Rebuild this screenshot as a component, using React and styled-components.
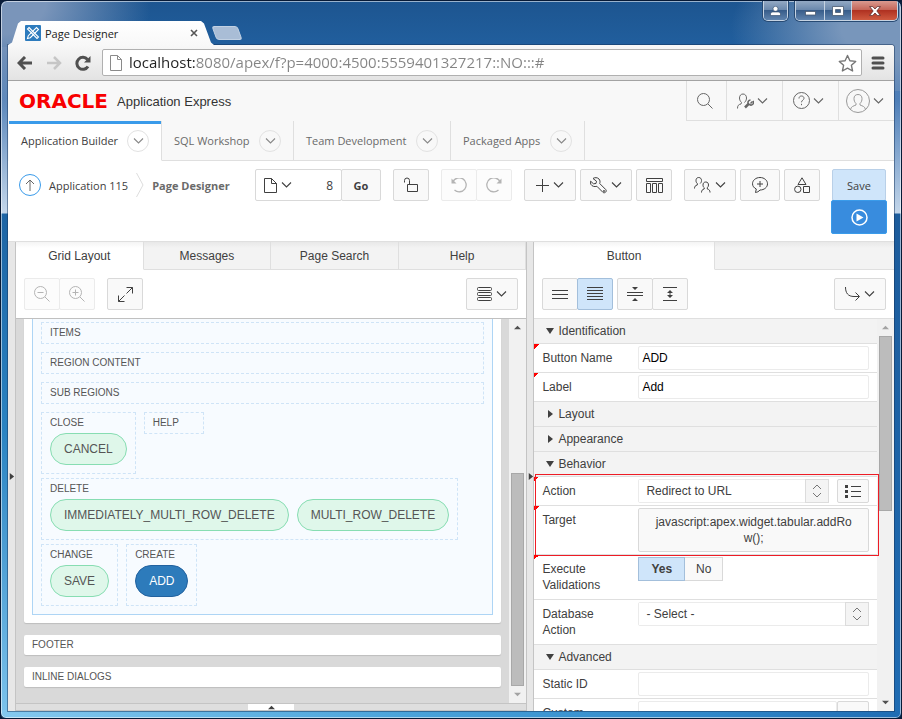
import React from 'react'
import styled, { createGlobalStyle, css, ThemeProvider } from 'styled-components'

const theme = {
  font: {
    ui: '"Open Sans", "Noto Sans", sans-serif',
    panel: '"Liberation Sans", Arial, sans-serif',
  },
  size: { xs: '10px', sm: '11px', md: '12px', lg: '13px', xl: '15px' },
  color: {
    text: '#404040',
    muted: '#6a6a6a',
    line: '#dfdfdf',
    strong: '#c4c4c4',
    button: '#f9f9f9',
    bar: '#f3f3f3',
    blue: '#3a9bea',
    selected: '#cfe5fa',
  },
}

const GlobalStyle = createGlobalStyle`
  * { box-sizing: border-box; }
  body { margin: 0; background: #0a1c38; }
  button, input, select { font: inherit; color: inherit; margin: 0; }
  button { cursor: pointer; }
  svg { display: block; flex: none; }
`

/* ---------- window frame ---------- */

const Frame = styled.div`
  height: 100vh;
  display: flex;
  flex-direction: column;
  overflow: hidden;
  border: 1px solid #071a36;
  border-radius: 7px 7px 6px 6px;
  box-shadow: inset 0 0 0 1px rgba(255, 255, 255, 0.55);
  font-family: ${({ theme }) => theme.font.ui};
  font-size: ${({ theme }) => theme.size.sm};
  color: ${({ theme }) => theme.color.text};
  background:
    radial-gradient(ellipse 150px 110px at 0 0, #7a95ba 30%, rgba(122, 149, 186, 0) 100%) left top / 180px 110px no-repeat,
    radial-gradient(ellipse 170px 90px at 100% 30%, #7896bb 35%, rgba(120, 150, 187, 0) 100%) right top / 200px 90px no-repeat,
    linear-gradient(#1d5590, #215f9e) left top / 100% 46px no-repeat,
    linear-gradient(90deg, #84c9ef, #4aa3da 45%, #2f86c8 80%, #1f6cb3) left bottom / 100% 8px no-repeat,
    linear-gradient(#4878b0 0, #5c88bc 100px, #c3d6ea 212px, #1d64a4 213px, #2a83c2 60%, #7cc3ec) left top / 50% 100% no-repeat,
    linear-gradient(#4878b0 0, #4f7fb8 100px, #c3d6ea 212px, #1d5c9c 213px, #1f6cb3) right top / 50% 100% no-repeat;
`

const TitleBar = styled.header`
  flex: none;
  height: 44px;
  padding: 0 3px 0 7px;
  display: flex;
  align-items: flex-end;
`

const BrowserTab = styled.div`
  width: 206px;
  height: 24px;
  padding: 0 16px 0 17px;
  display: flex;
  align-items: center;
  gap: 4px;
  background: linear-gradient(#fff, #f8f8f8);
  color: #222;
  clip-path: polygon(0 100%, 4px 90%, 10px 10%, 13px 0, calc(100% - 13px) 0, calc(100% - 10px) 10%, calc(100% - 3px) 90%, 100% 100%);
`

const TabTitle = styled.span`
  flex: 1;
`

const BareButton = styled.button`
  display: flex;
  align-items: center;
  justify-content: center;
  padding: 0;
  border: 0;
  background: none;
`

const NewTab = styled(BareButton)`
  width: 26px;
  height: 14px;
  margin-bottom: 5px;
  border: 1px solid #c2d1e3;
  border-radius: 3px;
  background: #a9bdd6;
  transform: skewX(20deg);
`

const WindowControls = styled.div`
  margin-left: auto;
  align-self: flex-start;
  display: flex;
  gap: 7px;
`

const ControlGroup = styled.div`
  display: flex;
  height: 20px;
  border: 1px solid #c6d3e2;
  border-top: 0;
  border-radius: 0 0 5px 5px;
  overflow: hidden;
  box-shadow: 0 0 0 1px #274a73;
`

const ControlButton = styled(BareButton)`
  width: ${({ $width }) => $width}px;
  background: ${({ $danger }) =>
    $danger
      ? 'linear-gradient(#d99a90, #c5675a 45%, #b03222 50%, #cf5a40)'
      : 'linear-gradient(#93a9c4, #6c89ad 45%, #385d8a 50%, #5f83ad)'};

  & + & {
    border-left: 1px solid #c6d3e2;
  }
`

const Browser = styled.div`
  flex: 1;
  min-height: 0;
  margin: 0 7px 7px;
  display: flex;
  flex-direction: column;
  background: #fff;
  border-radius: 0 3px 0 0;
  box-shadow: 0 0 0 1px rgba(20, 50, 90, 0.5);
`

const AddressBar = styled.div`
  flex: none;
  height: 36px;
  padding: 0 9px;
  display: flex;
  align-items: center;
  background: linear-gradient(#f8f8f8, #e3e3e3);
  border-bottom: 1px solid #a3a3a3;
  border-radius: 0 3px 0 0;
`

const NavIcons = styled.div`
  display: flex;
  gap: 13px;
  margin-right: 11px;
`

const Omnibox = styled.label`
  flex: 1;
  height: 27px;
  padding: 0 4px 0 7px;
  display: flex;
  align-items: center;
  gap: 7px;
  background: #fff;
  border: 1px solid #b0b0b0;
  border-radius: 2px;
`

const UrlInput = styled.input`
  flex: 1;
  min-width: 0;
  padding: 0 0 2px;
  border: 0;
  outline: 0;
  font-size: ${({ theme }) => theme.size.xl};
  background: linear-gradient(90deg, #222 66px, #848484 66px);
  -webkit-background-clip: text;
  background-clip: text;
  -webkit-text-fill-color: transparent;
`

const MenuButton = styled(BareButton)`
  margin-left: 9px;
`

/* ---------- application header ---------- */

const AppHeader = styled.div`
  flex: none;
  height: 40px;
  display: flex;
  background: #f8f8f8;
`

const Brand = styled.a`
  padding-left: 11px;
  display: flex;
  align-items: center;
  font-family: ${({ theme }) => theme.font.panel};
  font-size: ${({ theme }) => theme.size.lg};
  color: #333;
  text-decoration: none;
`

const Logo = styled.span`
  width: 98px;
  font: bold 20px/20px "DejaVu Sans", sans-serif;
  color: #f80000;
`

const HeaderActions = styled.nav`
  margin-left: auto;
  display: flex;
  border-bottom: 1px solid ${({ theme }) => theme.color.line};
`

const HeaderAction = styled(BareButton)`
  width: ${({ $wide }) => ($wide ? 56 : 40)}px;
  padding-right: 4px;
  gap: 3px;
  border-left: 1px solid ${({ theme }) => theme.color.line};
  color: #666;
`

const NavTabs = styled.nav`
  flex: none;
  height: 40px;
  padding-left: 1px;
  display: flex;
  background: #f8f8f8;

  &::after {
    content: "";
    flex: 1;
    border-bottom: 1px solid ${({ theme }) => theme.color.line};
  }
`

const NavTab = styled.a`
  width: ${({ $width }) => $width}px;
  padding: 0 12px;
  display: flex;
  align-items: center;
  justify-content: space-between;
  border-right: 1px solid ${({ theme }) => theme.color.line};
  border-bottom: 1px solid ${({ theme }) => theme.color.line};
  color: ${({ theme }) => theme.color.muted};
  text-decoration: none;

  ${({ $active }) =>
    $active &&
    css`
      background: linear-gradient(${({ theme }) => theme.color.blue} 3px, #fff 3px);
      border-bottom-color: #fff;
      color: ${({ theme }) => theme.color.text};
    `}
`

const Ring = styled.span`
  width: 22px;
  height: 22px;
  display: flex;
  align-items: center;
  justify-content: center;
  border: 1px solid #e2e2e2;
  border-radius: 50%;
  color: #888;
`

/* ---------- page toolbar ---------- */

const PageToolbar = styled.div`
  flex: none;
  padding: 8px 8px 7px 11px;
  display: flex;
  align-items: flex-start;
  gap: 12px;
`

const Breadcrumb = styled.nav`
  height: 32px;
  margin-right: auto;
  display: flex;
  align-items: center;
  gap: 8px;

  a {
    color: inherit;
    text-decoration: none;
  }

  strong {
    color: ${({ theme }) => theme.color.muted};
  }
`

const UpLink = styled.a`
  width: 22px;
  height: 22px;
  display: flex;
  align-items: center;
  justify-content: center;
  border: 1px solid ${({ theme }) => theme.color.blue};
  border-radius: 50%;
`

const Cluster = styled.div`
  display: flex;
  gap: 4px;
`

const Joined = styled.div`
  display: flex;

  & > * + * {
    margin-left: -1px;
  }
`

const toolSizes = { sm: '36px', md: '40px', lg: '52px' }

const ToolButton = styled.button`
  width: ${({ $size }) => toolSizes[$size || 'sm']};
  height: 32px;
  padding: 0;
  display: flex;
  align-items: center;
  justify-content: center;
  gap: 4px;
  border: 1px solid #d9d9d9;
  border-radius: 2px;
  background: ${({ theme }) => theme.color.button};
  color: ${({ theme }) => theme.color.text};

  &:disabled {
    border-color: #ebebeb;
    background: #fcfcfc;
    color: #b4b4b4;
  }

  ${({ $selected }) =>
    $selected &&
    css`
      position: relative;
      background: ${({ theme }) => theme.color.selected};
      border-color: #a3bfdb;
    `}
`

const GoButton = styled(ToolButton)`
  font-weight: bold;
`

const PagePicker = styled.div`
  width: 87px;
  display: flex;
  align-items: center;
  border: 1px solid #d9d9d9;
  border-radius: 2px;
  background: #fff;
`

const PickerButton = styled(BareButton)`
  padding-left: 8px;
  gap: 4px;
`

const PageInput = styled.input`
  flex: 1;
  min-width: 0;
  padding: 0 8px 0 0;
  border: 0;
  outline: 0;
  background: none;
  text-align: right;
  font-size: ${({ theme }) => theme.size.md};
`

const SaveStack = styled.div`
  width: 54px;
`

const SaveButton = styled(ToolButton)`
  width: 100%;
  background: ${({ theme }) => theme.color.selected};
  border-color: #b9d0e8;
`

const RunButton = styled(ToolButton)`
  position: relative;
  width: calc(100% + 2px);
  height: 34px;
  margin: -1px -1px 0;
  border-color: #3a9bea;
  background: #388cde;
  color: #fff;
`

/* ---------- panes ---------- */

const Workspace = styled.main`
  flex: 1;
  min-height: 0;
  display: flex;
  border-top: 1px solid ${({ theme }) => theme.color.line};
  font-family: ${({ theme }) => theme.font.panel};
  font-size: ${({ theme }) => theme.size.md};
`

const Splitter = styled.div`
  flex: none;
  width: ${({ $width }) => $width}px;
  display: flex;
  align-items: center;
  justify-content: center;
  border-right: 1px solid ${({ theme }) => theme.color.strong};
  background: #e7e7e7;
`

const Pane = styled.section`
  flex: ${({ $grow }) => $grow} 1 0;
  min-width: 0;
  display: flex;
  flex-direction: column;
  border-right: ${({ $edge, theme }) => ($edge ? `1px solid ${theme.color.strong}` : '0')};
`

const PaneTabs = styled.div`
  flex: none;
  height: 28px;
  display: flex;
`

const PaneTab = styled.button`
  flex: 1;
  padding: 0;
  border: solid ${({ theme }) => theme.color.line};
  border-width: 0 1px 1px 0;
  background: linear-gradient(#e8e8e8, #f3f3f3 6px);

  ${({ $active }) =>
    $active &&
    css`
      border-bottom-color: #fff;
      background: linear-gradient(#f4f4f4, #fff 6px);
    `}
`

const TabFiller = styled.div`
  flex: 1;
  border-bottom: 1px solid ${({ theme }) => theme.color.line};
  background: linear-gradient(#e8e8e8, #f3f3f3 6px);
`

const PaneToolbar = styled.div`
  flex: none;
  height: 49px;
  padding: 8px;
  display: flex;
  gap: ${({ $gap }) => $gap}px;
  border-bottom: 1px solid ${({ $line }) => $line};

  & > :last-child {
    margin-left: auto;
  }
`

const PaneBody = styled.div`
  flex: 1;
  min-height: 0;
  display: flex;
  overflow: hidden;
`

const Scrollbar = styled.div`
  flex: none;
  width: 17px;
  display: flex;
  flex-direction: column;
  align-items: center;
  background: #f1f1f1;
`

const ScrollArrow = styled(BareButton)`
  flex: none;
  width: 17px;
  height: 17px;
  color: ${({ $dim }) => ($dim ? '#a3a3a3' : '#505050')};
`

const ScrollTrack = styled.div`
  flex: 1;
  width: 13px;
  display: flex;
  align-items: ${({ $end }) => ($end ? 'flex-end' : 'flex-start')};
`

const ScrollThumb = styled.div`
  width: 100%;
  height: ${({ $length }) => $length}%;
  border: 1px solid #a8a8a8;
  background: #bcbcbc;
`

/* ---------- grid layout pane ---------- */

const LayoutCanvas = styled.div`
  flex: 1;
  min-width: 0;
  padding: 0 8px;
  background: #d9d9d9;
  color: #555;
`

const PageCard = styled.div`
  padding: 0 8px 8px;
  margin-bottom: 12px;
  background: #fff;
  border-radius: 0 0 2px 2px;
  box-shadow: 0 1px 1px #bdbdbd;
`

const Region = styled.div`
  padding: 3px 8px 8px;
  display: flex;
  flex-direction: column;
  gap: 4px;
  border: 1px solid #aed5f5;
  border-top: 0;
  background: #f7fbff;
`

const SlotStack = styled.div`
  margin-bottom: 4px;
  display: flex;
  flex-direction: column;
  gap: 8px;
`

const SlotRow = styled.div`
  display: flex;
  align-items: flex-start;
  gap: 8px;
`

const SlotBox = styled.div`
  min-width: 60px;
  padding: ${({ $filled }) => ($filled ? '0 8px 8px' : '0 8px')};
  border: 1px dashed #cfe4f7;
`

const SlotTitle = styled.div`
  font-size: ${({ theme }) => theme.size.xs};
  line-height: 20px;
`

const Pills = styled.div`
  display: flex;
  gap: 8px;
`

const Pill = styled.button`
  height: 32px;
  padding: 0 13px;
  border: 1px solid #87ddb2;
  border-radius: 16px;
  background: #dff7ea;

  ${({ $current }) =>
    $current &&
    css`
      border-color: #22629f;
      background: #2d7bbb;
      color: #fff;
    `}
`

const PositionCard = styled.div`
  height: 20px;
  margin-bottom: 12px;
  padding: 0 8px;
  font-size: ${({ theme }) => theme.size.xs};
  line-height: 20px;
  background: #fff;
  border-radius: 2px;
  box-shadow: 0 1px 1px #bdbdbd;
`

const BottomSplitter = styled.div`
  flex: none;
  height: 8px;
  display: flex;
  justify-content: center;
  border: solid ${({ theme }) => theme.color.strong};
  border-width: 1px 0;
  background: #dedede;
`

const SplitterHandle = styled(BareButton)`
  width: 46px;
  background: #fff;
`

/* ---------- property editor ---------- */

const Properties = styled.div`
  flex: 1;
  min-width: 0;
`

const GroupHeader = styled.button`
  width: 100%;
  height: 25px;
  padding: 0 12px;
  display: flex;
  align-items: center;
  gap: 4px;
  border: 0;
  border-bottom: 1px solid ${({ theme }) => theme.color.line};
  background: ${({ theme }) => theme.color.bar};
`

const Property = styled.div`
  position: relative;
  min-height: ${({ $tall }) => ($tall ? 45 : 29)}px;
  padding: 2px 8px;
  display: grid;
  grid-template-columns: 96px 1fr;
  align-items: start;
  border-bottom: 1px solid ${({ theme }) => theme.color.line};

  &::before {
    content: ${({ $changed }) => ($changed ? '""' : 'none')};
    position: absolute;
    top: 0;
    left: 0;
    width: 5px;
    height: 5px;
    background: linear-gradient(135deg, #f00 50%, transparent 50%);
  }
`

const PropertyLabel = styled.label`
  padding: 4px 24px 0 0;
  line-height: 16px;
`

const TextField = styled.input`
  width: 100%;
  min-width: 0;
  height: 24px;
  padding: 0 3px;
  border: 1px solid #ebebeb;
  border-radius: 2px;
  background: #fff;
  color: #000;
`

const FieldRow = styled.div`
  display: flex;
  gap: ${({ $gap }) => $gap || 0}px;
`

const SelectShell = styled.div`
  flex: 1;
  height: 24px;
  display: flex;
  border: 1px solid #ebebeb;
  border-radius: 2px;
`

const Select = styled.select`
  flex: 1;
  min-width: 0;
  padding: 0 7px;
  appearance: none;
  border: 0;
  background: #fff;
`

const SelectArrow = styled.span`
  width: 24px;
  margin: -1px;
  display: flex;
  align-items: center;
  justify-content: center;
  border: 1px solid #dcdcdc;
  background: #f4f4f4;
  color: #777;
`

const SideButton = styled(ToolButton)`
  flex: none;
  width: 32px;
  height: 24px;
`

const TargetButton = styled(ToolButton)`
  display: block;
  width: 100%;
  height: 44px;
  padding: 0 14px;
  line-height: 16px;
  word-break: break-all;
`

const Choice = styled.label`
  height: 24px;
  padding: 0 ${({ $checked }) => ($checked ? 12 : 11)}px;
  display: flex;
  align-items: center;
  border: 1px solid #d9d9d9;
  background: ${({ theme }) => theme.color.button};

  &:has(input:checked) {
    z-index: 1;
    border-color: #a3bfdb;
    background: ${({ theme }) => theme.color.selected};
    font-weight: bold;
  }

  input {
    appearance: none;
    width: 0;
    height: 0;
    margin: 0;
  }
`

const Highlight = styled.div`
  position: relative;

  &::after {
    content: "";
    position: absolute;
    inset: -3px -2px -1px 1px;
    border: 1px solid #ee1c25;
    pointer-events: none;
  }
`

/* ---------- icons ---------- */

const Icon = ({ w = 16, h = 16, sw = 1, children, ...rest }) => (
  <svg width={w} height={h} viewBox={`0 0 ${w} ${h}`} fill="none" stroke="currentColor" strokeWidth={sw} aria-hidden="true" {...rest}>
    {children}
  </svg>
)

const Chevron = () => <Icon w={11} h={6} sw={1.1}><path d="M1 .5l4.500 4.500L10 .5" /></Icon>

const Triangle = ({ dir = 'up', size = 7 }) => {
  const d = { up: 'M0 6l4-4 4 4z', down: 'M0 1h8l-4 6z', flat: 'M0 2h8l-4 4z', right: 'M2 0v8l5-4z' }[dir]
  return <svg width={size} height={size} viewBox="0 0 8 8" fill="currentColor" aria-hidden="true"><path d={d} /></svg>
}

const ApexIcon = () => (
  <svg width="16" height="16" viewBox="0 0 16 16" aria-hidden="true">
    <rect width="16" height="16" rx="1" fill="#2d7bbd" />
    <g fill="none" stroke="#fff" strokeWidth="1.100">
      <path d="M4 2.500L13.500 12l-1.500 1.500L2.500 4z" />
      <path d="M2.500 13.500l.8-2.800 8.200-8.200 2 2-8.200 8.200z" />
    </g>
  </svg>
)

const BackIcon = () => <Icon w={16} h={14} sw={3} stroke="#505050"><path d="M15 7H3M8 1L2 7l6 6" /></Icon>
const ForwardIcon = () => <Icon w={16} h={14} sw={2.500} stroke="#c6c6c6"><path d="M1 7h12M8 1l6 6-6 6" /></Icon>
const ReloadIcon = () => (
  <Icon w={16} h={16} sw={3} stroke="#505050">
    <path d="M13 11.500A6 6 0 1 1 12.500 4.500" />
    <path d="M15.500 1v6.500H9z" fill="#505050" stroke="none" />
  </Icon>
)
const StarIcon = () => <Icon w={19} h={18} sw={1.4} stroke="#777"><path d="M9.500 1.500l2.400 5.300 5.800.6-4.300 3.900 1.200 5.700-5.100-2.900-5.100 2.900 1.200-5.700L1.300 7.400l5.800-.6z" strokeLinejoin="round" /></Icon>
const DocIcon = () => <Icon w={12} h={16} stroke="#8a8a8a"><path d="M.5.5h7l4 4v11H.5zM7.500.5v4h4" /></Icon>
const MenuIcon = () => <Icon w={14} h={14} sw={3} stroke="#505050" strokeLinecap="round"><path d="M2 2h10M2 7h10M2 12h10" /></Icon>
const CloseX = () => <Icon w={8} h={8} sw={1.6} stroke="#555"><path d="M1 1l6 6M7 1L1 7" /></Icon>

const SearchIcon = () => <Icon><circle cx="6.500" cy="6.500" r="6" /><path d="M11 11l4.500 4.500" /></Icon>
const UserWrenchIcon = () => (
  <Icon w={17}>
    <path d="M.5 15.500c0-3 1-4 3.500-4.500l.5-1.500C3 8 2.500 6.500 2.500 5c0-2.500 1.500-4 3.500-4s3.500 1.500 3.500 4c0 1.500-.5 3-2 4.500" />
    <path d="M8 14.500l4-4" strokeWidth="2.500" />
    <path d="M15.500 8.500l-2 2M11.500 11a2.500 2.500 0 0 1 2-4M16 8a2.500 2.500 0 0 1-4 3" strokeWidth="1.500" />
  </Icon>
)
const HelpIcon = () => (
  <Icon w={17} h={17}>
    <circle cx="8.500" cy="8.500" r="8" />
    <path d="M6 6.500c0-1.500 1-2.500 2.500-2.500S11 5 11 6.300c0 1.700-2.500 1.900-2.500 4M8.500 11.800v1.400" />
  </Icon>
)
const AvatarIcon = () => (
  <Icon w={24} h={24} stroke="#999">
    <circle cx="12" cy="12" r="11.500" />
    <path d="M4.500 20.500c.5-3 3-3.500 5.500-4.500v-1.500C8.500 13 8 11.500 8 9.500 8 7 9.500 5.500 12 5.500S16 7 16 9.500c0 2-.5 3.500-2 5V16c2.500 1 5 1.500 5.500 4.500" />
  </Icon>
)
const UpArrow = () => <Icon w={10} h={12} stroke="#666"><path d="M5 12V1M1 5l4-4 4 4" /></Icon>
const Separator = () => <Icon w={8} h={24} stroke="#ddd"><path d="M.5 0l6.500 12L.5 24" /></Icon>
const FileIcon = () => <Icon w={13} h={15}><path d="M.5.5h7l5 5v9H.5zM7.500.5v5h5" /></Icon>
const LockIcon = () => <Icon w={14}><path d="M3.500 7.500h10v7h-10zM.5 5.500v-2a2.500 2.500 0 0 1 5 0v4" /></Icon>
const UndoIcon = () => (
  <Icon w={16} h={15} sw={1.300}>
    <path d="M2 3.500a7 7 0 1 1 1.500 8.500" />
    <path d="M.5.500v5h5z" fill="currentColor" stroke="none" />
  </Icon>
)
const RedoIcon = () => (
  <Icon w={16} h={15} sw={1.300}>
    <path d="M14 3.500a7 7 0 1 0-1.500 8.500" />
    <path d="M15.500.500v5h-5z" fill="currentColor" stroke="none" />
  </Icon>
)
const PlusIcon = () => <Icon w={13} h={13}><path d="M6.500 0v13M0 6.500h13" /></Icon>
const WrenchIcon = () => (
  <Icon w={17} h={17}>
    <path d="M3 1.500C4.500.3 7.500.3 9 2c1.200 1.400 1.200 3 .7 4.500l6 6c1.600 2-1 4.300-2.800 2.800l-6-6C4.500 10 2 9.300 1 7.500.4 6.500.3 5.300.6 4.200l2.900 2.600L6 6.500l.5-2.300z" />
    <circle cx="14" cy="14" r=".6" />
  </Icon>
)
const ColumnsIcon = () => <Icon w={17} h={15}><path d="M.5.5h16v3H.5zM.5 5.500h4v9h-4zM6.500 5.500h4v9h-4zM12.500 5.500h4v9h-4z" /></Icon>
const TeamIcon = () => (
  <Icon w={17}>
    <path d="M.5 11.500c0-2 .8-3 2.800-3.500V6.500C2.500 5.800 2 5 2 3.500 2 1.700 3 .5 4.700.5s2.800 1.200 2.800 3c0 1.500-.5 2.300-1.300 3" />
    <path d="M7.500 15.500c0-2 .8-3 2.700-3.500v-1.300C9.300 10 9 9.200 9 8c0-1.800 1-3 2.800-3s2.700 1.200 2.700 3c0 1.200-.4 2-1.200 2.700V12c2 .5 2.700 1.500 2.700 3.500" />
  </Icon>
)
const CommentIcon = () => <Icon><path d="M3.500 15.500l.8-3.500C2 11 .5 9 .5 6.800.5 3.300 3.800.5 8 .5s7.500 2.800 7.500 6.300S12.200 13 8 13c-1.300 1.500-2.800 2.300-4.500 2.500zM8 4v6M5 7h6" /></Icon>
const ShapesIcon = () => <Icon><path d="M8 .8l4 6.700H4zM9.500 9.500h6v6h-6z" /><circle cx="3.800" cy="12.300" r="3.200" /></Icon>
const RunIcon = () => <Icon w={17} h={17} sw={1.500}><circle cx="8.500" cy="8.500" r="7.500" /><path d="M5.500 4.500v8L12.500 8.500z" fill="currentColor" stroke="none" /></Icon>

const ZoomOutIcon = () => <Icon><circle cx="6.500" cy="6.500" r="6" /><path d="M11 11l4.500 4.500M3.500 6.500h6" /></Icon>
const ZoomInIcon = () => <Icon><circle cx="6.500" cy="6.500" r="6" /><path d="M11 11l4.500 4.500M3.500 6.500h6M6.500 3.500v6" /></Icon>
const ExpandIcon = () => <Icon w={15} h={15}><path d="M8.500.5h6v6M14.500.5L8.500 6.500M6.500 14.500h-6v-6M.5 14.500l6-6" /></Icon>
const ListIcon = () => (
  <Icon w={15} h={15}>
    <rect x=".5" y=".5" width="14" height="3" rx="1" />
    <rect x=".5" y="5.500" width="14" height="3" rx="1" />
    <rect x=".5" y="10.500" width="14" height="3" rx="1" />
  </Icon>
)
const CommonIcon = () => <Icon w={16} h={14}><path d="M0 3.500h16M0 7.500h16M0 11.500h16" /></Icon>
const AllIcon = () => <Icon w={16} h={14}><path d="M0 .5h16M0 3.500h16M0 6.500h16M0 9.500h16M0 12.500h16" /></Icon>
const CollapseIcon = () => (
  <Icon w={16} h={14}>
    <path d="M0 5.500h16M0 8.500h16" />
    <path d="M5 0h6L8 3zM5 14h6l-3-3z" fill="currentColor" stroke="none" />
  </Icon>
)
const ExpandAllIcon = () => (
  <Icon w={16} h={14}>
    <path d="M1 .5h14M1 13.500h14M8 5v4" />
    <path d="M5 6h6L8 3zM5 8h6l-3 3z" fill="currentColor" stroke="none" />
  </Icon>
)
const GotoIcon = () => <Icon w={15} h={14}><path d="M.5 0C.5 6 3 9.500 9 9.500h5M10.500 5.500l4 4-4 4" /></Icon>
const UpDownIcon = () => <Icon w={10} h={14}><path d="M1 5l4-4 4 4M1 9l4 4 4-4" /></Icon>
const BulletsIcon = () => (
  <Icon w={16} h={13}>
    <path d="M6 1.500h10M6 6.500h10M6 11.500h10" />
    <path d="M0 1.500h3M0 6.500h3M0 11.500h3" strokeWidth="3" />
  </Icon>
)

/* ---------- pieces ---------- */

const navTabs = [
  { label: 'Application Builder', width: 153, active: true },
  { label: 'SQL Workshop', width: 132 },
  { label: 'Team Development', width: 157 },
  { label: 'Packaged Apps', width: 134 },
]

function Slot({ title, buttons = [], current }) {
  return (
    <SlotBox $filled={buttons.length > 0}>
      <SlotTitle>{title}</SlotTitle>
      {buttons.length > 0 && (
        <Pills>
          {buttons.map(name => <Pill key={name} $current={name === current}>{name}</Pill>)}
        </Pills>
      )}
    </SlotBox>
  )
}

function Scroller({ length, end, dimUp, dimDown }) {
  return (
    <Scrollbar>
      <ScrollArrow aria-label="Scroll up" $dim={dimUp}><Triangle dir="up" /></ScrollArrow>
      <ScrollTrack $end={end}><ScrollThumb $length={length} /></ScrollTrack>
      <ScrollArrow aria-label="Scroll down" $dim={dimDown}><Triangle dir="flat" /></ScrollArrow>
    </Scrollbar>
  )
}

function Group({ title, open }) {
  return (
    <GroupHeader aria-expanded={!!open}>
      <Triangle dir={open ? 'down' : 'right'} size={8} />
      {title}
    </GroupHeader>
  )
}

function SelectField({ id, value }) {
  return (
    <SelectShell>
      <Select id={id} defaultValue={value}>
        <option>{value}</option>
      </Select>
      <SelectArrow><UpDownIcon /></SelectArrow>
    </SelectShell>
  )
}

function Titlebar() {
  return (
    <TitleBar>
      <BrowserTab>
        <ApexIcon />
        <TabTitle>Page Designer</TabTitle>
        <BareButton aria-label="Close tab"><CloseX /></BareButton>
      </BrowserTab>
      <NewTab aria-label="New tab" />
      <WindowControls>
        <ControlGroup>
          <ControlButton $width={23} aria-label="Profile">
            <svg width="11" height="10" viewBox="0 0 11 10" fill="#fff" stroke="#2b4668" strokeWidth=".6"><circle cx="5.500" cy="2.800" r="2.500" /><path d="M.5 9.500V8c0-1.500 1.500-2 3-2h4c1.500 0 3 .5 3 2v1.500z" /></svg>
          </ControlButton>
        </ControlGroup>
        <ControlGroup>
          <ControlButton $width={28} aria-label="Minimize">
            <svg width="11" height="10" viewBox="0 0 11 10"><rect x=".5" y="5.500" width="10" height="3.500" fill="#fff" stroke="#4a5a70" strokeWidth=".8" /></svg>
          </ControlButton>
          <ControlButton $width={27} aria-label="Maximize">
            <svg width="12" height="10" viewBox="0 0 12 10"><path d="M.5.5h11v9H.5zM3.500 3.500v3h5v-3z" fill="#fff" fillRule="evenodd" stroke="#4a5a70" strokeWidth=".8" /></svg>
          </ControlButton>
          <ControlButton $width={46} $danger aria-label="Close">
            <svg width="12" height="10" viewBox="0 0 12 10"><path d="M.6.6h3.200L6 3 8.200.6h3.200L7.800 5l3.600 4.400H8.200L6 7 3.800 9.400H.6L4.200 5z" fill="#fff" stroke="#5a2a2a" strokeWidth=".8" /></svg>
          </ControlButton>
        </ControlGroup>
      </WindowControls>
    </TitleBar>
  )
}

function LayoutPane() {
  return (
    <Pane $grow={511} $edge>
      <PaneTabs>
        <PaneTab $active>Grid Layout</PaneTab>
        <PaneTab>Messages</PaneTab>
        <PaneTab>Page Search</PaneTab>
        <PaneTab>Help</PaneTab>
      </PaneTabs>
      <PaneToolbar $gap={12} $line="#c0c0c0">
        <Joined>
          <ToolButton disabled aria-label="Zoom out"><ZoomOutIcon /></ToolButton>
          <ToolButton disabled aria-label="Zoom in"><ZoomInIcon /></ToolButton>
        </Joined>
        <ToolButton aria-label="Expand"><ExpandIcon /></ToolButton>
        <ToolButton $size="lg" aria-label="Layout menu"><ListIcon /><Chevron /></ToolButton>
      </PaneToolbar>
      <PaneBody>
        <LayoutCanvas>
          <PageCard>
            <Region>
              <SlotStack>
                <Slot title="ITEMS" />
                <Slot title="REGION CONTENT" />
                <Slot title="SUB REGIONS" />
              </SlotStack>
              <SlotRow>
                <Slot title="CLOSE" buttons={['CANCEL']} />
                <Slot title="HELP" />
              </SlotRow>
              <SlotRow>
                <Slot title="DELETE" buttons={['IMMEDIATELY_MULTI_ROW_DELETE', 'MULTI_ROW_DELETE']} />
              </SlotRow>
              <SlotRow>
                <Slot title="CHANGE" buttons={['SAVE']} />
                <Slot title="CREATE" buttons={['ADD']} current="ADD" />
              </SlotRow>
            </Region>
          </PageCard>
          <PositionCard>FOOTER</PositionCard>
          <PositionCard>INLINE DIALOGS</PositionCard>
        </LayoutCanvas>
        <Scroller length={61} end dimDown />
      </PaneBody>
      <BottomSplitter>
        <SplitterHandle aria-label="Expand gallery"><Triangle dir="up" /></SplitterHandle>
      </BottomSplitter>
    </Pane>
  )
}

function PropertyPane() {
  return (
    <Pane $grow={360}>
      <PaneTabs>
        <PaneTab $active>Button</PaneTab>
        <TabFiller />
      </PaneTabs>
      <PaneToolbar $gap={4} $line="#dfdfdf">
        <Joined>
          <ToolButton aria-label="Show common"><CommonIcon /></ToolButton>
          <ToolButton $selected aria-label="Show all"><AllIcon /></ToolButton>
        </Joined>
        <Joined>
          <ToolButton aria-label="Collapse all"><CollapseIcon /></ToolButton>
          <ToolButton aria-label="Expand all"><ExpandAllIcon /></ToolButton>
        </Joined>
        <ToolButton $size="lg" aria-label="Go to group"><GotoIcon /><Chevron /></ToolButton>
      </PaneToolbar>
      <PaneBody>
        <Properties>
          <Group title="Identification" open />
          <Property $changed>
            <PropertyLabel htmlFor="button-name">Button Name</PropertyLabel>
            <TextField id="button-name" defaultValue="ADD" />
          </Property>
          <Property $changed>
            <PropertyLabel htmlFor="label">Label</PropertyLabel>
            <TextField id="label" defaultValue="Add" />
          </Property>
          <Group title="Layout" />
          <Group title="Appearance" />
          <Group title="Behavior" open />
          <Highlight>
            <Property $changed>
              <PropertyLabel htmlFor="action">Action</PropertyLabel>
              <FieldRow $gap={8}>
                <SelectField id="action" value="Redirect to URL" />
                <SideButton aria-label="Quick picks"><BulletsIcon /></SideButton>
              </FieldRow>
            </Property>
            <Property $changed>
              <PropertyLabel htmlFor="target">Target</PropertyLabel>
              <TargetButton id="target">javascript:apex.widget.tabular.addRow();</TargetButton>
            </Property>
          </Highlight>
          <Property $changed $tall>
            <PropertyLabel as="span">Execute Validations</PropertyLabel>
            <Joined role="radiogroup" aria-label="Execute Validations">
              <Choice $checked><input type="radio" name="validate" defaultChecked />Yes</Choice>
              <Choice><input type="radio" name="validate" />No</Choice>
            </Joined>
          </Property>
          <Property $tall>
            <PropertyLabel htmlFor="db-action">Database Action</PropertyLabel>
            <SelectField id="db-action" value="- Select -" />
          </Property>
          <Group title="Advanced" open />
          <Property>
            <PropertyLabel htmlFor="static-id">Static ID</PropertyLabel>
            <TextField id="static-id" />
          </Property>
          <Property $tall>
            <PropertyLabel htmlFor="custom">Custom</PropertyLabel>
            <FieldRow>
              <TextField id="custom" />
              <SideButton aria-label="Edit"><Triangle dir="up" /></SideButton>
            </FieldRow>
          </Property>
        </Properties>
        <Scroller length={49} dimUp />
      </PaneBody>
    </Pane>
  )
}

function App() {
  return (
    <ThemeProvider theme={theme}>
      <GlobalStyle />
      <Frame>
        <Titlebar />
        <Browser>
          <AddressBar>
            <NavIcons>
              <BareButton aria-label="Back"><BackIcon /></BareButton>
              <BareButton aria-label="Forward"><ForwardIcon /></BareButton>
              <BareButton aria-label="Reload"><ReloadIcon /></BareButton>
            </NavIcons>
            <Omnibox>
              <DocIcon />
              <UrlInput aria-label="Address" defaultValue="localhost:8080/apex/f?p=4000:4500:5559401327217::NO:::#" />
              <StarIcon />
            </Omnibox>
            <MenuButton aria-label="Menu"><MenuIcon /></MenuButton>
          </AddressBar>
          <AppHeader>
            <Brand href="#"><Logo>ORACLE</Logo>Application Express</Brand>
            <HeaderActions>
              <HeaderAction aria-label="Search"><SearchIcon /></HeaderAction>
              <HeaderAction $wide aria-label="Administration"><UserWrenchIcon /><Chevron /></HeaderAction>
              <HeaderAction $wide aria-label="Help"><HelpIcon /><Chevron /></HeaderAction>
              <HeaderAction $wide aria-label="Account"><AvatarIcon /><Chevron /></HeaderAction>
            </HeaderActions>
          </AppHeader>
          <NavTabs>
            {navTabs.map(tab => (
              <NavTab key={tab.label} href="#" $width={tab.width} $active={tab.active}>
                {tab.label}
                <Ring><Chevron /></Ring>
              </NavTab>
            ))}
          </NavTabs>
          <PageToolbar>
            <Breadcrumb>
              <UpLink href="#" aria-label="Up"><UpArrow /></UpLink>
              <a href="#">Application 115</a>
              <Separator />
              <strong>Page Designer</strong>
            </Breadcrumb>
            <Joined>
              <PagePicker>
                <PickerButton aria-label="Pages"><FileIcon /><Chevron /></PickerButton>
                <PageInput aria-label="Page" defaultValue="8" />
              </PagePicker>
              <GoButton $size="md">Go</GoButton>
            </Joined>
            <ToolButton aria-label="Lock"><LockIcon /></ToolButton>
            <Joined>
              <ToolButton disabled aria-label="Undo"><UndoIcon /></ToolButton>
              <ToolButton disabled aria-label="Redo"><RedoIcon /></ToolButton>
            </Joined>
            <Cluster>
              <ToolButton $size="lg" aria-label="Create"><PlusIcon /><Chevron /></ToolButton>
              <ToolButton $size="lg" aria-label="Utilities"><WrenchIcon /><Chevron /></ToolButton>
              <ToolButton aria-label="Component view"><ColumnsIcon /></ToolButton>
            </Cluster>
            <Cluster>
              <ToolButton $size="lg" aria-label="Team"><TeamIcon /><Chevron /></ToolButton>
              <ToolButton $size="md" aria-label="Comments"><CommentIcon /></ToolButton>
              <ToolButton aria-label="Shared components"><ShapesIcon /></ToolButton>
            </Cluster>
            <SaveStack>
              <SaveButton>Save</SaveButton>
              <RunButton aria-label="Run page"><RunIcon /></RunButton>
            </SaveStack>
          </PageToolbar>
          <Workspace>
            <Splitter $width={8}><Triangle dir="right" /></Splitter>
            <LayoutPane />
            <Splitter $width={7}><Triangle dir="right" /></Splitter>
            <PropertyPane />
          </Workspace>
        </Browser>
      </Frame>
    </ThemeProvider>
  )
}

export default App
